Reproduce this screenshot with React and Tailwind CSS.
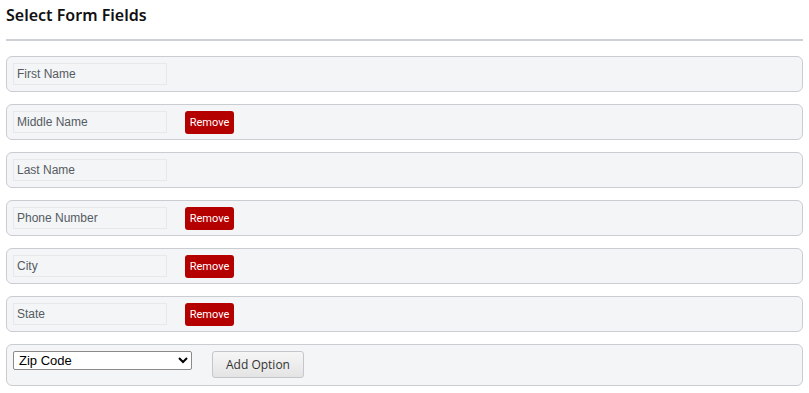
import React from 'react'

const fields = [
  { label: 'First Name', removable: false },
  { label: 'Middle Name', removable: true },
  { label: 'Last Name', removable: false },
  { label: 'Phone Number', removable: true },
  { label: 'City', removable: true },
  { label: 'State', removable: true },
]

export default function App() {
  return (
    <div className="min-h-screen bg-white px-[6px] pt-[4px]" style={{ fontFamily: '"Liberation Sans", Arial, sans-serif' }}>
      {/* Header */}
      <h2 className="text-[16px] leading-[22px] font-semibold text-[#111] font-['Noto_Sans',sans-serif]">Select Form Fields</h2>
      <div className="mt-[13px] h-[2px] bg-[#cdd0d4]" />

      <div className="mt-[15px] flex flex-col gap-[12px]">
        {fields.map((f) => (
          <div
            key={f.label}
            className="flex items-center h-[36px] border border-[#c9cdd2] bg-[#f4f5f6] rounded-[6px] px-[6px]"
          >
            <input
              readOnly
              value={f.label}
              className="w-[154px] h-[22px] border border-[#e6e8ea] bg-[#f4f5f6] px-[3px] text-[12px] text-[#555b63] outline-none"
            />
            {f.removable && (
              <button className="ml-[18px] w-[49px] h-[23px] rounded-[3px] bg-[#b50000] text-white text-[11px] leading-none font-['Roboto',sans-serif]">
                Remove
              </button>
            )}
          </div>
        ))}

        {/* Add row */}
        <div className="flex items-start h-[42px] border border-[#c9cdd2] bg-[#f4f5f6] rounded-[6px] px-[6px] pt-[6px]">
          <select
            defaultValue="zip"
            className="w-[179px] h-[19px] border border-[#8a8a8a] rounded-[2px] bg-white text-[13px] leading-none text-black pl-[1px]"
          >
            <option value="zip">Zip Code</option>
            <option value="country">Country</option>
            <option value="email">Email</option>
          </select>
          <button className="ml-[20px] w-[92px] h-[27px] border border-[#c3c6ca] rounded-[3px] bg-gradient-to-b from-[#f6f6f6] to-[#e4e4e4] text-[12px] text-[#333] font-['Open_Sans',sans-serif]">
            Add Option
          </button>
        </div>
      </div>
    </div>
  )
}
